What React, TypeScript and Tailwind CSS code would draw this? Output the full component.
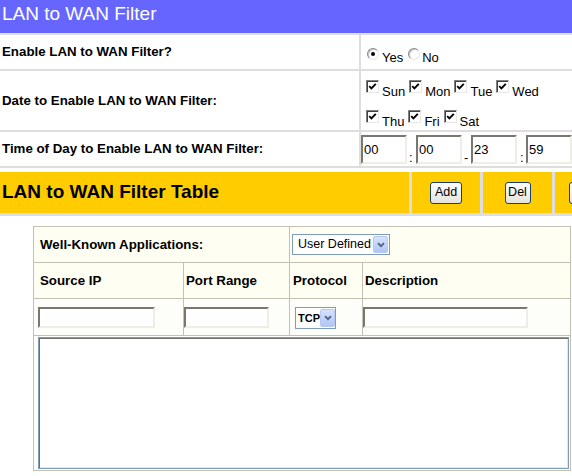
import React from 'react'

function Radio({ on }: { on?: boolean }) {
    return (
        <span className="flex h-[12px] w-[12px] shrink-0 items-center justify-center rounded-full border border-[#8a8a8a] border-r-[#e8e8e8] border-b-[#e8e8e8] bg-white shadow-[inset_1px_1px_0_#c4c4c4]">
            {on && <span className="h-[4px] w-[4px] rounded-full bg-black" />}
        </span>
    )
}

function Check() {
    return (
        <span className="flex h-[13px] w-[13px] shrink-0 items-center justify-center border border-[#808080] border-r-[#e8e8e8] border-b-[#e8e8e8] bg-white shadow-[inset_1px_1px_0_#404040]">
            <svg width="9" height="9" viewBox="0 0 9 9">
                <path d="M1.2 4.2 L3.4 6.4 L7.8 1.8" fill="none" stroke="#000" strokeWidth="1.9" />
            </svg>
        </span>
    )
}

function Day({ label, first }: { label: string; first?: boolean }) {
    return (
        <span className={first ? 'flex items-start' : 'ml-[4px] flex items-start'}>
            <Check />
            <span className="ml-[3px] mt-[4px] leading-[15px]">{label}</span>
        </span>
    )
}

function TimeBox({ value }: { value: string }) {
    return (
        <input
            readOnly
            defaultValue={value}
            className="h-[29px] w-[46px] border-2 border-[#7a786e] border-r-[#efeee6] border-b-[#efeee6] bg-white pl-[1px] text-[13px] text-black outline-none"
        />
    )
}

function TextBox({ w }: { w: string }) {
    return (
        <input
            readOnly
            className={`${w} h-[21px] border-2 border-[#7a786e] border-r-[#efeee6] border-b-[#efeee6] bg-white outline-none`}
        />
    )
}

function Arrow() {
    return (
        <span className="flex h-full w-[15px] shrink-0 items-center justify-center rounded-[2px] border border-[#b7c9f3] bg-linear-to-b from-[#d6e2fd] to-[#b1c6f6]">
            <svg width="8" height="6" viewBox="0 0 8 6">
                <path d="M1 1.2 L4 4.2 L7 1.2" fill="none" stroke="#4d6185" strokeWidth="1.8" />
            </svg>
        </span>
    )
}

function XpButton({ label, w }: { label: string; w: string }) {
    return (
        <button className={`${w} h-[22px] shrink-0 rounded-[3px] border border-[#1c3f6e] bg-linear-to-b from-white to-[#e4e3da] text-[12.5px] leading-none text-black`}>
            {label}
        </button>
    )
}

export default function App() {
    return (
        <div className="h-[476px] w-[572px] overflow-hidden bg-white font-['Liberation_Sans',Arial,sans-serif] text-[13px] text-black">
            {/* title bar */}
            <div className="h-[33px] bg-[#6666ff] pl-[2px] pt-[3px] text-[19px] leading-[22px] text-white">LAN to WAN Filter</div>

            {/* settings */}
            <div className="grid grid-cols-[359px_1fr] gap-[2px] bg-[#dedede] py-[2px]">
                <div className="flex h-[34px] items-center bg-white pl-[2px] text-[13.3px] font-bold">Enable LAN to WAN Filter?</div>
                <div className="flex h-[34px] items-start bg-white pl-[6px] pt-[13px]">
                    <Radio on />
                    <span className="ml-[3px] mt-[2px] leading-[15px]">Yes</span>
                    <span className="ml-[5px]">
                        <Radio />
                    </span>
                    <span className="ml-[2px] mt-[2px] leading-[15px]">No</span>
                </div>

                <div className="flex h-[59px] items-center bg-white pl-[2px] text-[13.3px] font-bold">Date to Enable LAN to WAN Filter:</div>
                <div className="h-[59px] bg-white pl-[5px] pt-[9px]">
                    <div className="flex h-[30px]">
                        <Day label="Sun" first />
                        <Day label="Mon" />
                        <Day label="Tue" />
                        <Day label="Wed" />
                    </div>
                    <div className="flex">
                        <Day label="Thu" first />
                        <Day label="Fri" />
                        <Day label="Sat" />
                    </div>
                </div>

                <div className="flex h-[34px] items-center bg-white pl-[2px] text-[13.3px] font-bold">Time of Day to Enable LAN to WAN Filter:</div>
                <div className="flex h-[34px] items-end bg-white pb-[2px]">
                    <TimeBox value="00" />
                    <span className="w-[9px] pl-[2px] leading-[12px]">:</span>
                    <TimeBox value="00" />
                    <span className="w-[9px] pl-[2px] leading-[12px]">-</span>
                    <TimeBox value="23" />
                    <span className="w-[9px] pl-[3px] leading-[12px]">:</span>
                    <TimeBox value="59" />
                </div>
            </div>

            {/* table bar */}
            <div className="mt-[4px] grid grid-cols-[409px_68px_69px_1fr] gap-x-[3px] bg-[#dedede] pb-[3px]">
                <div className="flex h-[41px] items-center bg-[#ffcc00] pl-[2px] text-[19px] font-bold">LAN to WAN Filter Table</div>
                <div className="flex h-[41px] items-center justify-center bg-[#ffcc00]">
                    <XpButton label="Add" w="w-[32px]" />
                </div>
                <div className="flex h-[41px] items-center justify-center bg-[#ffcc00]">
                    <XpButton label="Del" w="w-[26px]" />
                </div>
                <div className="flex h-[41px] items-center bg-[#ffcc00] pl-[14px]">
                    <XpButton label="" w="w-[40px]" />
                </div>
            </div>

            {/* filter entry */}
            <div className="ml-[33px] mt-[10px] grid w-[538px] grid-cols-[149px_105px_72px_1fr] grid-rows-[35px_35px_36px_134px] gap-px border border-[#c4c1b2] bg-[#c4c1b2]">
                <div className="col-span-2 flex items-center bg-[#fefef2] pl-[6px] text-[13.3px] font-bold">Well-Known Applications:</div>
                <div className="col-span-2 flex items-center bg-[#fefef2] pl-[2px]">
                    <div className="flex h-[21px] w-[98px] items-stretch border border-[#7f9db9] bg-white p-px">
                        <span className="flex-1 pl-[4px] text-[12.5px] leading-[17px]">User Defined</span>
                        <Arrow />
                    </div>
                </div>

                <div className="flex items-center bg-[#fefef2] pl-[6px] text-[13.3px] font-bold">Source IP</div>
                <div className="flex items-center bg-[#fefef2] pl-[2px] text-[13.3px] font-bold">Port Range</div>
                <div className="flex items-center bg-[#fefef2] pl-[3px] text-[13.3px] font-bold">Protocol</div>
                <div className="flex items-center bg-[#fefef2] pl-[2px] text-[13.3px] font-bold">Description</div>

                <div className="flex items-center bg-[#fdfdfa] pl-[4px]">
                    <TextBox w="w-[117px]" />
                </div>
                <div className="flex items-center bg-[#fdfdfa]">
                    <TextBox w="w-[85px]" />
                </div>
                <div className="flex items-center bg-[#fdfdfa] pl-[5px] pt-[2px]">
                    <div className="flex h-[22px] w-[41px] items-stretch border border-[#7f9db9] bg-white p-px">
                        <span className="flex-1 pl-[1px] text-[11px] font-bold leading-[18px]">TCP</span>
                        <Arrow />
                    </div>
                </div>
                <div className="flex items-center bg-[#fdfdfa]">
                    <TextBox w="w-[165px]" />
                </div>

                <div className="col-span-4 bg-[#fdfdfa] pl-[4px] pt-px">
                    <div className="h-[132px] w-[531px] border border-[#7f9db9] bg-white shadow-[inset_1px_1px_0_#6f6f6f,inset_-1px_-1px_0_#e6e6e6]" />
                </div>
            </div>
        </div>
    )
}
